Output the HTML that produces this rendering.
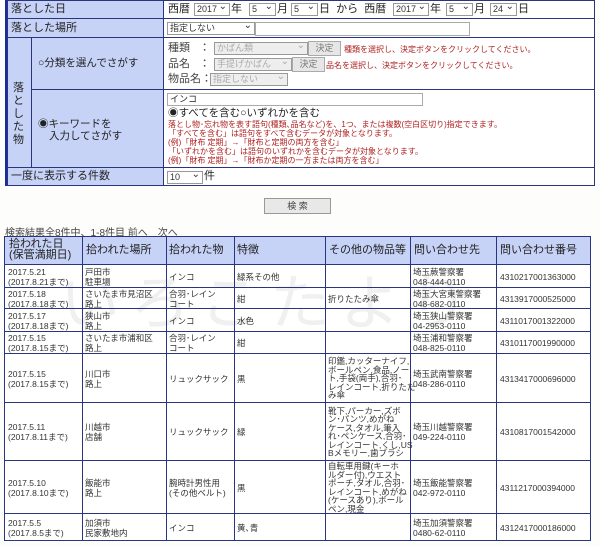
<!DOCTYPE html>
<html><head><meta charset="utf-8">
<style>
*{box-sizing:border-box;margin:0;padding:0}
body{width:600px;height:547px;background:#fdfdfb;font-family:"Liberation Sans","Noto Sans CJK JP",sans-serif;color:#222;position:relative;overflow:hidden}
.a{position:absolute}
.lb{background:#c6d2f6;border:1px solid #2a3580}
.t{font-size:11px;white-space:nowrap;line-height:13px}
.sel{position:absolute;height:13px;border:1px solid #999;background:#fff;font-size:9px;line-height:11px;padding-left:2px;color:#333}
.sel:after{content:"⌄";position:absolute;right:2px;top:-3px;font-size:10px}
.dis{background:#eee;color:#aaa}
.btn{position:absolute;height:15px;border:1px solid #aaa;background:#e6e6e6;font-size:9px;line-height:13px;text-align:center;color:#777}
.red{color:#b02020;font-size:8px;line-height:9px;white-space:nowrap}
.d{font-size:8.5px;line-height:10px;color:#333;white-space:nowrap}
.h{font-size:11px;line-height:11px;color:#222}
</style></head><body>
<div class="a" style="left:5px;top:0;width:590px;height:186px;border:1px solid #2a3580;background:#fff"></div>
<div class="a" style="left:5px;top:0;width:3px;height:186px;background:#1a2aa0"></div>
<div class="a lb" style="left:7px;top:0;width:157px;height:19px"></div>
<div class="a t" style="left:11px;top:3px">落とした日</div>
<div class="a lb" style="left:7px;top:18px;width:157px;height:20px"></div>
<div class="a t" style="left:11px;top:22px">落とした場所</div>
<div class="a lb" style="left:7px;top:37px;width:25px;height:131px"></div>
<div class="a t" style="left:13px;top:82px;width:12px;white-space:normal;line-height:13px;font-size:11px">落とした物</div>
<div class="a lb" style="left:31px;top:37px;width:133px;height:53px"></div>
<div class="a t" style="left:38px;top:57px;font-size:10.5px">○分類を選んでさがす</div>
<div class="a lb" style="left:31px;top:89px;width:133px;height:79px"></div>
<div class="a t" style="left:38px;top:118px;font-size:10.5px">◉キーワードを</div>
<div class="a t" style="left:49px;top:130px;font-size:10.5px">入力してさがす</div>
<div class="a lb" style="left:7px;top:167px;width:157px;height:19px"></div>
<div class="a t" style="left:11px;top:170px">一度に表示する件数</div>
<div class="a" style="left:163px;top:18px;width:432px;height:1px;background:#2a3580"></div>
<div class="a" style="left:163px;top:37px;width:432px;height:1px;background:#2a3580"></div>
<div class="a" style="left:163px;top:89px;width:432px;height:1px;background:#2a3580"></div>
<div class="a" style="left:163px;top:167px;width:432px;height:1px;background:#2a3580"></div>
<div class="a t" style="left:168px;top:3px">西暦</div>
<div class="sel" style="left:194px;top:3px;width:36px">2017</div><div class="a t" style="left:231px;top:3px">年</div>
<div class="sel" style="left:249px;top:3px;width:27px">5</div><div class="a t" style="left:277px;top:3px">月</div>
<div class="sel" style="left:291px;top:3px;width:27px">5</div><div class="a t" style="left:319px;top:3px">日 &nbsp;から &nbsp;西暦</div>
<div class="sel" style="left:393px;top:3px;width:36px">2017</div><div class="a t" style="left:430px;top:3px">年</div>
<div class="sel" style="left:446px;top:3px;width:27px">5</div><div class="a t" style="left:474px;top:3px">月</div>
<div class="sel" style="left:490px;top:3px;width:27px">24</div><div class="a t" style="left:518px;top:3px">日</div>
<div class="sel" style="left:167px;top:22px;width:88px">指定しない</div>
<div class="a" style="left:255px;top:22px;width:215px;height:14px;border:1px solid #aaa;background:#fff"></div>
<div class="a t" style="left:168px;top:42px;color:#444">種類 &nbsp; ：</div>
<div class="sel dis" style="left:214px;top:42px;width:94px">かばん類</div>
<div class="btn" style="left:308px;top:41px;width:33px">決定</div>
<div class="a red" style="left:344px;top:45px">種類を選択し、決定ボタンをクリックしてください。</div>
<div class="a t" style="left:168px;top:58px;color:#444">品名 &nbsp; ：</div>
<div class="sel dis" style="left:214px;top:58px;width:78px">手提げかばん</div>
<div class="btn" style="left:292px;top:57px;width:33px">決定</div>
<div class="a red" style="left:326px;top:61px">品名を選択し、決定ボタンをクリックしてください。</div>
<div class="a t" style="left:168px;top:73px;color:#444">物品名：</div>
<div class="sel dis" style="left:210px;top:73px;width:78px">指定しない</div>
<div class="a" style="left:167px;top:93px;width:256px;height:13px;border:1px solid #aaa;background:#fff;font-size:9px;line-height:11px;padding-left:2px">インコ</div>
<div class="a t" style="left:168px;top:107px;font-size:10.5px">◉すべてを含む○いずれかを含む</div>
<div class="a red" style="left:168px;top:120px">落とし物･忘れ物を表す語句(種類､品名など)を、1つ、または複数(空白区切り)指定できます。<br>「すべてを含む」は語句をすべて含むデータが対象となります。<br>(例)「財布 定期」→「財布と定期の両方を含む」<br>「いずれかを含む」は語句のいずれかを含むデータが対象となります。<br>(例)「財布 定期」→「財布か定期の一方または両方を含む」</div>
<div class="sel" style="left:167px;top:171px;width:36px">10</div><div class="a t" style="left:204px;top:170px">件</div>
<div class="a" style="left:264px;top:198px;width:67px;height:16px;border:1px solid #999;background:#e8e8e8;font-size:9px;line-height:14px;text-align:center;color:#444">検 索</div>
<div class="a" style="left:5px;top:224px;font-size:10px;color:#444;white-space:nowrap">検索結果全8件中、1-8件目 前へ　次へ</div>
<div class="a" style="left:4px;top:236px;width:587px;height:305px;border:1px solid #2a3580;background:#fff"></div>
<div class="a" style="left:5px;top:237px;width:585px;height:27px;background:#c6d2f6"></div>
<div class="a" style="left:60px;top:255px;font-size:60px;color:#f0f0f0;letter-spacing:10px;white-space:nowrap">いろこたより</div>
<div id="g"></div>
<div class="a h" style="left:9px;top:239px">拾われた日<br>(保管満期日)</div>
<div class="a h" style="left:86px;top:245px">拾われた場所</div>
<div class="a h" style="left:169px;top:245px">拾われた物</div>
<div class="a h" style="left:237px;top:245px">特徴</div>
<div class="a h" style="left:329px;top:245px">その他の物品等</div>
<div class="a h" style="left:414px;top:245px">問い合わせ先</div>
<div class="a h" style="left:500px;top:245px">問い合わせ番号</div>
<script>
var xs=[82,166,234,325,410,496],ys=[264,287,308,331,353,402,460,513,541];
var g='';xs.forEach(function(x){g+='<div class="a" style="left:'+x+'px;top:236px;width:1px;height:305px;background:#2a3580"></div>'});
ys.slice(0,8).forEach(function(y){g+='<div class="a" style="left:4px;top:'+y+'px;width:587px;height:1px;background:#2a3580"></div>'});
var R=[
["2017.5.21<br>(2017.8.21まで)","戸田市<br>駐車場","インコ","緑系その他","","埼玉蕨警察署<br>048-444-0110","4310217001363000"],
["2017.5.18<br>(2017.8.18まで)","さいたま市見沼区<br>路上","合羽･レイン<br>コート","紺","折りたたみ傘","埼玉大宮東警察署<br>048-682-0110","4313917000525000"],
["2017.5.17<br>(2017.8.18まで)","狭山市<br>路上","インコ","水色","","埼玉狭山警察署<br>04-2953-0110","4311017001322000"],
["2017.5.15<br>(2017.8.15まで)","さいたま市浦和区<br>路上","合羽･レイン<br>コート","紺","","埼玉浦和警察署<br>048-825-0110","4310117001990000"],
["2017.5.15<br>(2017.8.15まで)","川口市<br>路上","リュックサック","黒","印鑑,カッターナイフ,<br>ボールペン,食品,ノー<br>ト,手袋(両手),合羽･<br>レインコート,折りたた<br>み傘","埼玉武南警察署<br>048-286-0110","4313417000696000"],
["2017.5.11<br>(2017.8.11まで)","川越市<br>店舗","リュックサック","緑","靴下,パーカー,ズボ<br>ン･パンツ,めがね<br>ケース,タオル,筆入<br>れ･ペンケース,合羽･<br>レインコート,くし,US<br>Bメモリー,歯ブラシ","埼玉川越警察署<br>049-224-0110","4310817001542000"],
["2017.5.10<br>(2017.8.10まで)","飯能市<br>路上","腕時計男性用<br>(その他ベルト)","黒","自転車用鍵(キーホ<br>ルダー付),ウエスト<br>ポーチ,タオル,合羽･<br>レインコート,めがね<br>(ケースあり),ボール<br>ペン,現金","埼玉飯能警察署<br>042-972-0110","4311217000394000"],
["2017.5.5<br>(2017.8.5まで)","加須市<br>民家敷地内","インコ","黄､青","","埼玉加須警察署<br>0480-62-0110","4312417000186000"]];
var lx=[8,85,169,237,328,413,500];
R.forEach(function(r,i){var top=ys[i],bot=ys[i+1],mid=(top+bot)/2+1;
r.forEach(function(c,j){var n=c.split('<br>').length,lh=(j==4&&n>2)?8.5:10;g+='<div class="a d" style="left:'+lx[j]+'px;line-height:'+lh+'px;top:'+(mid-n*lh/2)+'px">'+c+'</div>'})});
document.getElementById('g').innerHTML=g;
</script>
</body></html>
